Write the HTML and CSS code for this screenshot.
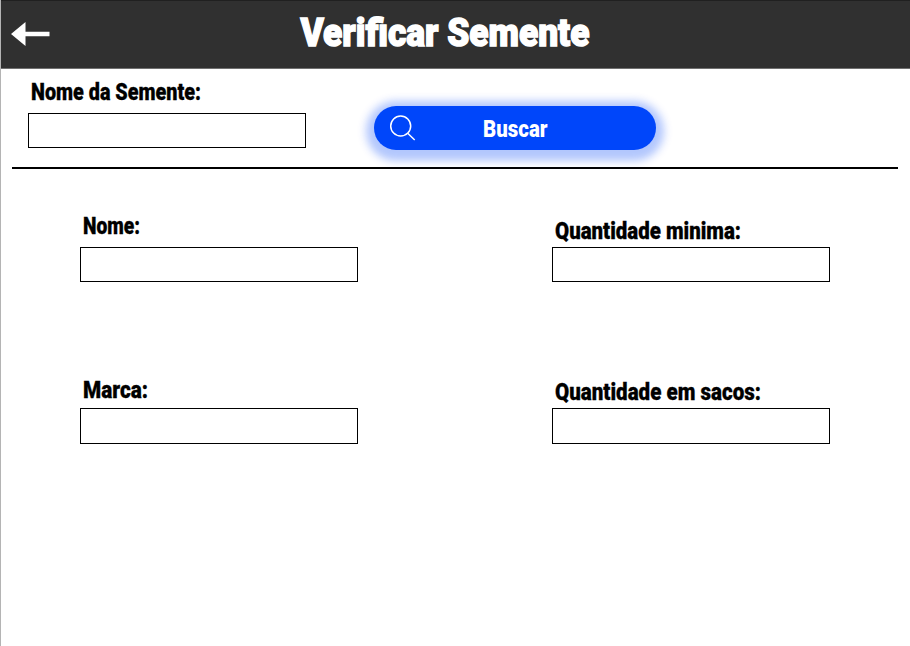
FILE: index.html
```html
<!DOCTYPE html>
<html lang="pt-BR">
<head>
<meta charset="utf-8">
<title>Verificar Semente</title>
<link rel="stylesheet" href="styles.css">
</head>
<body>
<div class="page">
  <header class="topbar">
    <a class="back" aria-label="Voltar"><svg width="40" height="26" viewBox="0 0 40 26"><path d="M0 13 14.5 1v9.8H38.5v4.4H14.5V25z" fill="#fff"/></svg></a>
    <h1 class="title"><svg width="300" height="48"><text x="0.5" y="36.5" textLength="289" lengthAdjust="spacingAndGlyphs">Verificar Semente</text></svg></h1>
  </header>
  <section class="search">
    <div class="field">
      <label class="label" for="busca"><svg width="278" height="28"><text x="3" y="21" textLength="170" lengthAdjust="spacingAndGlyphs">Nome da Semente:</text></svg></label>
      <input class="input" id="busca">
    </div>
    <button class="button">
      <svg class="lens" width="28" height="28" viewBox="0 0 28 28"><circle cx="11.7" cy="12" r="10"/><path d="m18.7 19.2 7 6.8"/></svg>
      <svg class="caption" width="70" height="28"><text x="0" y="22.5" textLength="64.5" lengthAdjust="spacingAndGlyphs">Buscar</text></svg>
    </button>
  </section>
  <main class="details">
    <div class="field">
      <label class="label name" for="nome"><svg width="278" height="28"><text x="3" y="22" textLength="57" lengthAdjust="spacingAndGlyphs">Nome:</text></svg></label>
      <input class="input" id="nome">
    </div>
    <div class="field">
      <label class="label" for="minima"><svg width="278" height="28"><text x="3" y="22" textLength="186" lengthAdjust="spacingAndGlyphs">Quantidade minima:</text></svg></label>
      <input class="input" id="minima">
    </div>
    <div class="field">
      <label class="label brand" for="marca"><svg width="278" height="28"><text x="3" y="20" textLength="65" lengthAdjust="spacingAndGlyphs">Marca:</text></svg></label>
      <input class="input tall" id="marca">
    </div>
    <div class="field">
      <label class="label bags" for="sacos"><svg width="278" height="28"><text x="3" y="21" textLength="206" lengthAdjust="spacingAndGlyphs">Quantidade em sacos:</text></svg></label>
      <input class="input tall" id="sacos">
    </div>
  </main>
</div>
</body>
</html>
```
FILE: styles.css
```css
* { box-sizing: border-box; }
body { margin: 0; background: #fff; font-family: Roboto, "Liberation Sans", sans-serif; }
svg { display: block; overflow: visible; }
.page { height: 646px; border-left: 1px solid #b4b4b4; overflow: hidden; }
.topbar {
  display: flex;
  align-items: flex-start;
  height: 69px;
  margin-left: -1px;
  padding-left: 10px;
  background: #303030;
  border-top: 1px solid #202020;
  border-bottom: 1px solid #707070;
  border-left: 1px solid #202020;
}
.back { width: 40px; margin-top: 20px; }
.title { margin: 8px 0 0 249px; font-size: 38px; font-weight: 900; }
.title text { fill: #fff; stroke: #fff; stroke-width: 1.4px; }
.search {
  display: flex;
  height: 100px;
  margin: 0 12px 0 11px;
  padding: 10px 0 0 16px;
  border-bottom: 2px solid #000;
}
.field { width: 278px; }
.label { display: block; height: 34px; font-size: 23.5px; font-weight: 900; }
.label text { fill: #000; stroke: #000; stroke-width: .3px; }
.input {
  display: block;
  width: 278px;
  height: 35px;
  border: 1px solid #000;
  border-radius: 0;
  background: none;
  padding: 0 8px;
  font: 20px Roboto, sans-serif;
}
.button {
  display: flex;
  align-items: center;
  width: 282px;
  height: 44px;
  margin: 27px 0 0 68px;
  padding: 0 0 0 15px;
  border: 0;
  border-radius: 22px;
  background: #0046fa;
  box-shadow: 0 3px 9px 8px rgba(0, 70, 250, .3);
  font: 900 23px Roboto, sans-serif;
}
.lens { fill: none; stroke: #fff; stroke-width: 1.5; }
.caption { margin-left: 66px; }
.caption text { fill: #fff; }
.details {
  display: grid;
  grid-template-columns: 278px 278px;
  column-gap: 194px;
  row-gap: 92px;
  padding: 48px 0 0 79px;
}
.details .label { height: 30px; }
.details .name { margin-top: -5px; height: 35px; }
.details .brand { margin-top: 4px; }
.details .label.brand { height: 30px; }
.details .bags { margin-top: 5px; height: 29px; }
.input.tall { height: 36px; }
```
